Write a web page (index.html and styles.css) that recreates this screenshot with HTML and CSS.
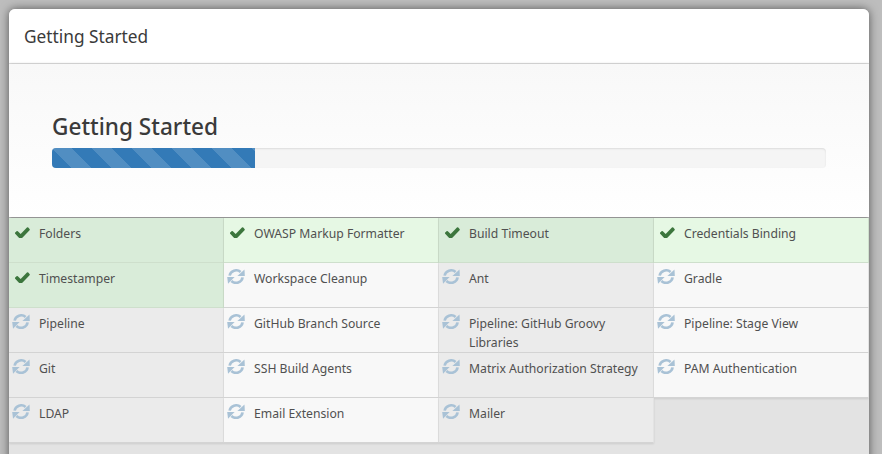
FILE: index.html
```html
<!DOCTYPE html>
<html lang="en">
<head>
<meta charset="utf-8">
<title>Getting Started</title>
<link rel="stylesheet" href="styles.css">
</head>
<body>
<svg class="defs" width="0" height="0" aria-hidden="true">
<symbol id="check" viewBox="128 300 1560 1120" preserveAspectRatio="none"><path d="M1671 566q0 40-28 68l-724 724-136 136q-28 28-68 28t-68-28l-136-136-362-362q-28-28-28-68t28-68l136-136q28-28 68-28t68 28l294 295 656-657q28-28 68-28t68 28l136 136q28 28 28 68z"/></symbol>
<symbol id="refresh" viewBox="0 0 18 15"><path class="arc" d="M2.6 6.6A6.6 6.2 0 0 1 13.6 3"/><path class="arc" d="M15.6 8.4A6.6 6.2 0 0 1 4.4 12"/><path d="M10.4 7L17.8 7 17.5 0.4z"/><path d="M0.2 8L7.6 8 1 14.8z"/></symbol>
</svg>
<main class="dialog">
  <header class="dialog-head">Getting Started</header>
  <section class="hero">
    <h1 class="hero-title">Getting Started</h1>
    <div class="progress"><div class="progress-bar" style="width:26.2%"></div></div>
  </section>
  <section class="plugins">
    <div class="plugin ok dark"><svg class="icon check"><use href="#check"/></svg>Folders</div>
    <div class="plugin ok"><svg class="icon check"><use href="#check"/></svg>OWASP Markup Formatter</div>
    <div class="plugin ok dark"><svg class="icon check"><use href="#check"/></svg>Build Timeout</div>
    <div class="plugin ok"><svg class="icon check"><use href="#check"/></svg>Credentials Binding</div>
    <div class="plugin ok dark"><svg class="icon check"><use href="#check"/></svg>Timestamper</div>
    <div class="plugin"><svg class="icon refresh"><use href="#refresh"/></svg>Workspace Cleanup</div>
    <div class="plugin dark"><svg class="icon refresh"><use href="#refresh"/></svg>Ant</div>
    <div class="plugin"><svg class="icon refresh"><use href="#refresh"/></svg>Gradle</div>
    <div class="plugin dark"><svg class="icon refresh"><use href="#refresh"/></svg>Pipeline</div>
    <div class="plugin"><svg class="icon refresh"><use href="#refresh"/></svg>GitHub Branch Source</div>
    <div class="plugin dark"><svg class="icon refresh"><use href="#refresh"/></svg>Pipeline: GitHub Groovy Libraries</div>
    <div class="plugin"><svg class="icon refresh"><use href="#refresh"/></svg>Pipeline: Stage View</div>
    <div class="plugin dark"><svg class="icon refresh"><use href="#refresh"/></svg>Git</div>
    <div class="plugin"><svg class="icon refresh"><use href="#refresh"/></svg>SSH Build Agents</div>
    <div class="plugin dark"><svg class="icon refresh"><use href="#refresh"/></svg>Matrix Authorization Strategy</div>
    <div class="plugin"><svg class="icon refresh"><use href="#refresh"/></svg>PAM Authentication</div>
    <div class="plugin dark"><svg class="icon refresh"><use href="#refresh"/></svg>LDAP</div>
    <div class="plugin"><svg class="icon refresh"><use href="#refresh"/></svg>Email Extension</div>
    <div class="plugin dark"><svg class="icon refresh"><use href="#refresh"/></svg>Mailer</div>
  </section>
</main>
</body>
</html>
```
FILE: styles.css
```css
html, body {
  margin: 0;
  height: 100%;
  overflow: hidden;
}
body {
  background: #bdbdbd;
  padding: 9px 13px 0 9px;
  box-sizing: border-box;
  font-family: "Noto Sans", "Open Sans", sans-serif;
  color: #3a3a3a;
}
.defs { position: absolute; }
.dialog {
  height: 460px;
  background: #e3e3e3;
  border-radius: 6px 6px 0 0;
  box-shadow: 0 0 10px rgba(0, 0, 0, .55);
  overflow: hidden;
}
.dialog-head {
  height: 55px;
  box-sizing: border-box;
  padding-left: 15px;
  background: #fff;
  border-bottom: 1px solid #e5e5e5;
  font-size: 17.3px;
  line-height: 56px;
}
.hero {
  position: relative;
  height: 153px;
  box-sizing: border-box;
  padding: 45px 43px 0;
  background: linear-gradient(#f8f8f8, #fff);
  box-shadow: 0 1px 3px rgba(0, 0, 0, .55);
}
.hero-title {
  margin: 0 0 4px;
  font-size: 22.6px;
  font-weight: 500;
  line-height: 35px;
}
.progress {
  height: 20px;
  background: #f5f5f5;
  border-radius: 4px;
  box-shadow: inset 0 1px 2px rgba(0, 0, 0, .1);
  overflow: hidden;
}
.progress-bar {
  height: 100%;
  background-color: #337ab7;
  background-image: linear-gradient(45deg, rgba(255,255,255,.15) 25%, transparent 25%, transparent 50%, rgba(255,255,255,.15) 50%, rgba(255,255,255,.15) 75%, transparent 75%);
  background-size: 40px 40px;
}
.plugins {
  display: grid;
  grid-template-columns: repeat(4, 215px);
  grid-auto-rows: 45px;
  margin-top: 1px;
}
.plugin {
  position: relative;
  box-sizing: border-box;
  padding: 6px 10px 0 30px;
  background: #f8f8f8;
  border-right: 1px solid #e3e3e3;
  border-bottom: 1px solid #d4d4d4;
  box-shadow: 0 1px 2px rgba(0, 0, 0, .1);
  font-size: 12.2px;
  line-height: 19px;
  color: #505050;
}
.plugin.dark { background: #ebebeb; }
.plugin.ok { background: #e6f8e4; border-bottom-color: #cfe0cd; border-right-color: #cfe0cd; }
.plugin.ok.dark { background: #d9ecd9; }
.icon {
  position: absolute;
  left: 3px;
  top: 6px;
  width: 18px;
  height: 15px;
}
.icon.check {
  left: 6px;
  top: 9px;
  width: 15px;
  height: 11px;
  fill: #3c763d;
}
.icon.refresh {
  fill: #a9c2d6;
}
.arc {
  fill: none;
  stroke: #a9c2d6;
  stroke-width: 2.6;
}
```
